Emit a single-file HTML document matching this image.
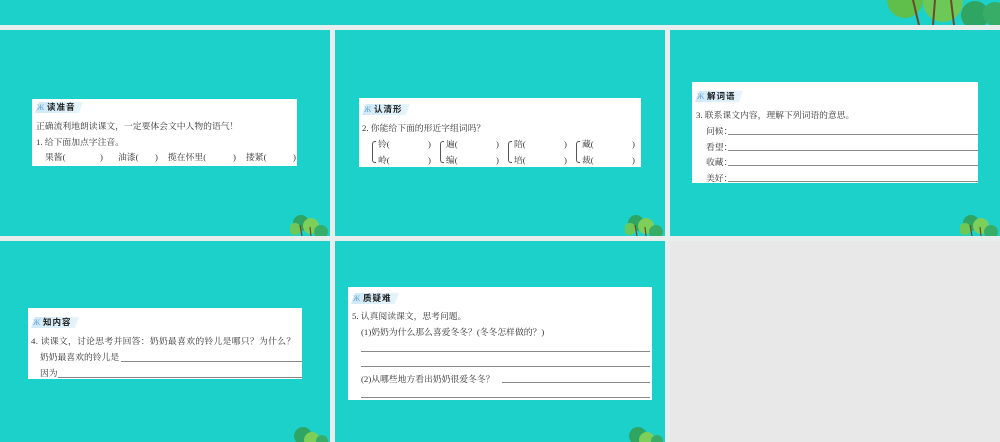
<!DOCTYPE html>
<html><head><meta charset="utf-8"><style>
*{margin:0;padding:0;box-sizing:border-box}
body{width:1000px;height:442px;background:#e7eeec;position:relative;overflow:hidden;font-family:"Liberation Serif","Noto Serif CJK SC",serif;color:#333}
.p{position:absolute;background:#1dd1cb;overflow:hidden}
.b{position:absolute;background:#fff}
.t{position:absolute;font-size:8.8px;line-height:10px;white-space:nowrap}
.tag{position:absolute;height:11px;width:46px}
.tag i{position:absolute;top:0;width:44px;height:11px;background:linear-gradient(90deg,#cfe9f7,#e6f4fb);transform:skewX(-20deg);left:2px}
.tag b{position:absolute;left:2px;top:1px;width:8px;height:9px;color:#6aa9d8;font-size:8px;font-weight:normal;line-height:9px}
.tag span{position:absolute;left:12px;top:0;font-size:8.5px;line-height:11px;font-family:"Noto Sans CJK SC",sans-serif;color:#222;font-weight:bold;letter-spacing:1px}
.ln{position:absolute;height:1px;background:#888}
.br{position:absolute;width:4px;height:22px;border:1px solid #555;border-right:none;border-radius:3px 0 0 3px}
.tree{position:absolute}
</style></head><body>
<div class="p" style="left:0;top:0;width:1000px;height:25px"></div>
<svg class="tree" style="left:875px;top:0" width="125" height="25" viewBox="0 0 125 25">
<circle cx="30" cy="0" r="18" fill="#5fbf4a"/><circle cx="68" cy="2" r="20" fill="#6cc957"/>
<circle cx="100" cy="15" r="14" fill="#2fa564"/><circle cx="120" cy="14" r="12" fill="#38ad68"/>
<path d="M38 0 L44 25 M76 0 L79 25 M60 0 L58 25" stroke="#6b4a2b" stroke-width="2"/>
</svg>
<div class="p" style="left:0;top:30px;width:330px;height:206px"></div>
<div class="p" style="left:335px;top:30px;width:330px;height:206px"></div>
<div class="p" style="left:670px;top:30px;width:330px;height:206px"></div>
<div class="p" style="left:0;top:241px;width:330px;height:201px"></div>
<div class="p" style="left:335px;top:241px;width:330px;height:201px"></div>

<!-- panel 1 -->
<div class="b" style="left:32px;top:99px;width:265px;height:67px"></div>
<div class="tag" style="left:35px;top:102px"><i></i><b>Ж</b><span>读准音</span></div>
<div class="t" style="left:36px;top:121px">正确流利地朗读课文，一定要体会文中人物的语气！</div>
<div class="t" style="left:36px;top:137px">1. 给下面加点字注音。</div>
<div class="t" style="left:45px;top:152px">果酱(</div><div class="t" style="left:100px;top:152px">)</div>
<div class="t" style="left:118px;top:152px">油漆(</div><div class="t" style="left:155px;top:152px">)</div>
<div class="t" style="left:168px;top:152px">揽在怀里(</div><div class="t" style="left:233px;top:152px">)</div>
<div class="t" style="left:246px;top:152px">搂紧(</div><div class="t" style="left:293px;top:152px">)</div>

<!-- panel 2 -->
<div class="b" style="left:359px;top:98px;width:282px;height:69px"></div>
<div class="tag" style="left:362px;top:104px"><i></i><b>Ж</b><span>认清形</span></div>
<div class="t" style="left:362px;top:123px">2. 你能给下面的形近字组词吗？</div>
<div class="br" style="left:372px;top:141px"></div><div class="br" style="left:440px;top:141px"></div><div class="br" style="left:508px;top:141px"></div><div class="br" style="left:576px;top:141px"></div>
<div class="t" style="left:378px;top:139px">铃(</div><div class="t" style="left:428px;top:139px">)</div>
<div class="t" style="left:446px;top:139px">遍(</div><div class="t" style="left:496px;top:139px">)</div>
<div class="t" style="left:514px;top:139px">陪(</div><div class="t" style="left:564px;top:139px">)</div>
<div class="t" style="left:582px;top:139px">藏(</div><div class="t" style="left:632px;top:139px">)</div>
<div class="t" style="left:378px;top:155px">岭(</div><div class="t" style="left:428px;top:155px">)</div>
<div class="t" style="left:446px;top:155px">编(</div><div class="t" style="left:496px;top:155px">)</div>
<div class="t" style="left:514px;top:155px">培(</div><div class="t" style="left:564px;top:155px">)</div>
<div class="t" style="left:582px;top:155px">裁(</div><div class="t" style="left:632px;top:155px">)</div>

<!-- panel 3 -->
<div class="b" style="left:692px;top:82px;width:286px;height:101px"></div>
<div class="tag" style="left:695px;top:91px"><i></i><b>Ж</b><span>解词语</span></div>
<div class="t" style="left:696px;top:110px">3. 联系课文内容，理解下列词语的意思。</div>
<div class="t" style="left:706px;top:126px">问候：</div><div class="ln" style="left:728px;top:134px;width:250px"></div>
<div class="t" style="left:706px;top:142px">看望：</div><div class="ln" style="left:728px;top:150px;width:250px"></div>
<div class="t" style="left:706px;top:157px">收藏：</div><div class="ln" style="left:728px;top:165px;width:250px"></div>
<div class="t" style="left:706px;top:173px">美好：</div><div class="ln" style="left:728px;top:181px;width:250px"></div>

<!-- panel 4 -->
<div class="b" style="left:28px;top:308px;width:274px;height:71px"></div>
<div class="tag" style="left:31px;top:317px"><i></i><b>Ж</b><span>知内容</span></div>
<div class="t" style="left:31px;top:336px;letter-spacing:0.3px">4. 读课文，讨论思考并回答：奶奶最喜欢的铃儿是哪只？为什么？</div>
<div class="t" style="left:40px;top:352px">奶奶最喜欢的铃儿是</div><div class="ln" style="left:121px;top:361px;width:181px"></div>
<div class="t" style="left:40px;top:368px">因为</div><div class="ln" style="left:58px;top:377px;width:244px"></div>

<!-- panel 5 -->
<div class="b" style="left:348px;top:287px;width:304px;height:113px"></div>
<div class="tag" style="left:351px;top:293px"><i></i><b>Ж</b><span>质疑难</span></div>
<div class="t" style="left:352px;top:311px">5. 认真阅读课文，思考问题。</div>
<div class="t" style="left:361px;top:327px">(1)奶奶为什么那么喜爱冬冬？(冬冬怎样做的？)</div>
<div class="ln" style="left:361px;top:351px;width:289px"></div>
<div class="ln" style="left:361px;top:366px;width:289px"></div>
<div class="t" style="left:361px;top:374px">(2)从哪些地方看出奶奶很爱冬冬？</div>
<div class="ln" style="left:502px;top:382px;width:148px"></div>
<div class="ln" style="left:361px;top:397px;width:289px"></div>

<!-- trees -->
<svg class="tree" style="left:290px;top:211px" width="40" height="25" viewBox="0 0 40 25"><circle cx="11" cy="12" r="8" fill="#2fa564"/><circle cx="21" cy="15" r="8" fill="#7cd05a"/><circle cx="5" cy="18" r="6" fill="#6cc957"/><circle cx="31" cy="21" r="7" fill="#38ad68"/><path d="M10 14L12 25M20 16L21 25" stroke="#6b4a2b" stroke-width="1.2"/></svg>
<svg class="tree" style="left:625px;top:211px" width="40" height="25" viewBox="0 0 40 25"><circle cx="11" cy="12" r="8" fill="#2fa564"/><circle cx="21" cy="15" r="8" fill="#7cd05a"/><circle cx="5" cy="18" r="6" fill="#6cc957"/><circle cx="31" cy="21" r="7" fill="#38ad68"/><path d="M10 14L12 25M20 16L21 25" stroke="#6b4a2b" stroke-width="1.2"/></svg>
<svg class="tree" style="left:960px;top:211px" width="40" height="25" viewBox="0 0 40 25"><circle cx="11" cy="12" r="8" fill="#2fa564"/><circle cx="21" cy="15" r="8" fill="#7cd05a"/><circle cx="5" cy="18" r="6" fill="#6cc957"/><circle cx="31" cy="21" r="7" fill="#38ad68"/><path d="M10 14L12 25M20 16L21 25" stroke="#6b4a2b" stroke-width="1.2"/></svg>
<svg class="tree" style="left:290px;top:424px" width="40" height="18" viewBox="0 0 40 18"><circle cx="13" cy="12" r="9" fill="#2fa564"/><circle cx="22" cy="16" r="8" fill="#7cd05a"/><circle cx="32" cy="17" r="6" fill="#38ad68"/></svg>
<svg class="tree" style="left:625px;top:424px" width="40" height="18" viewBox="0 0 40 18"><circle cx="13" cy="12" r="9" fill="#2fa564"/><circle cx="22" cy="16" r="8" fill="#7cd05a"/><circle cx="32" cy="17" r="6" fill="#38ad68"/></svg>
<div style="position:absolute;left:670px;top:241px;width:330px;height:201px;background:#e8e8e8"></div>
</body></html>
